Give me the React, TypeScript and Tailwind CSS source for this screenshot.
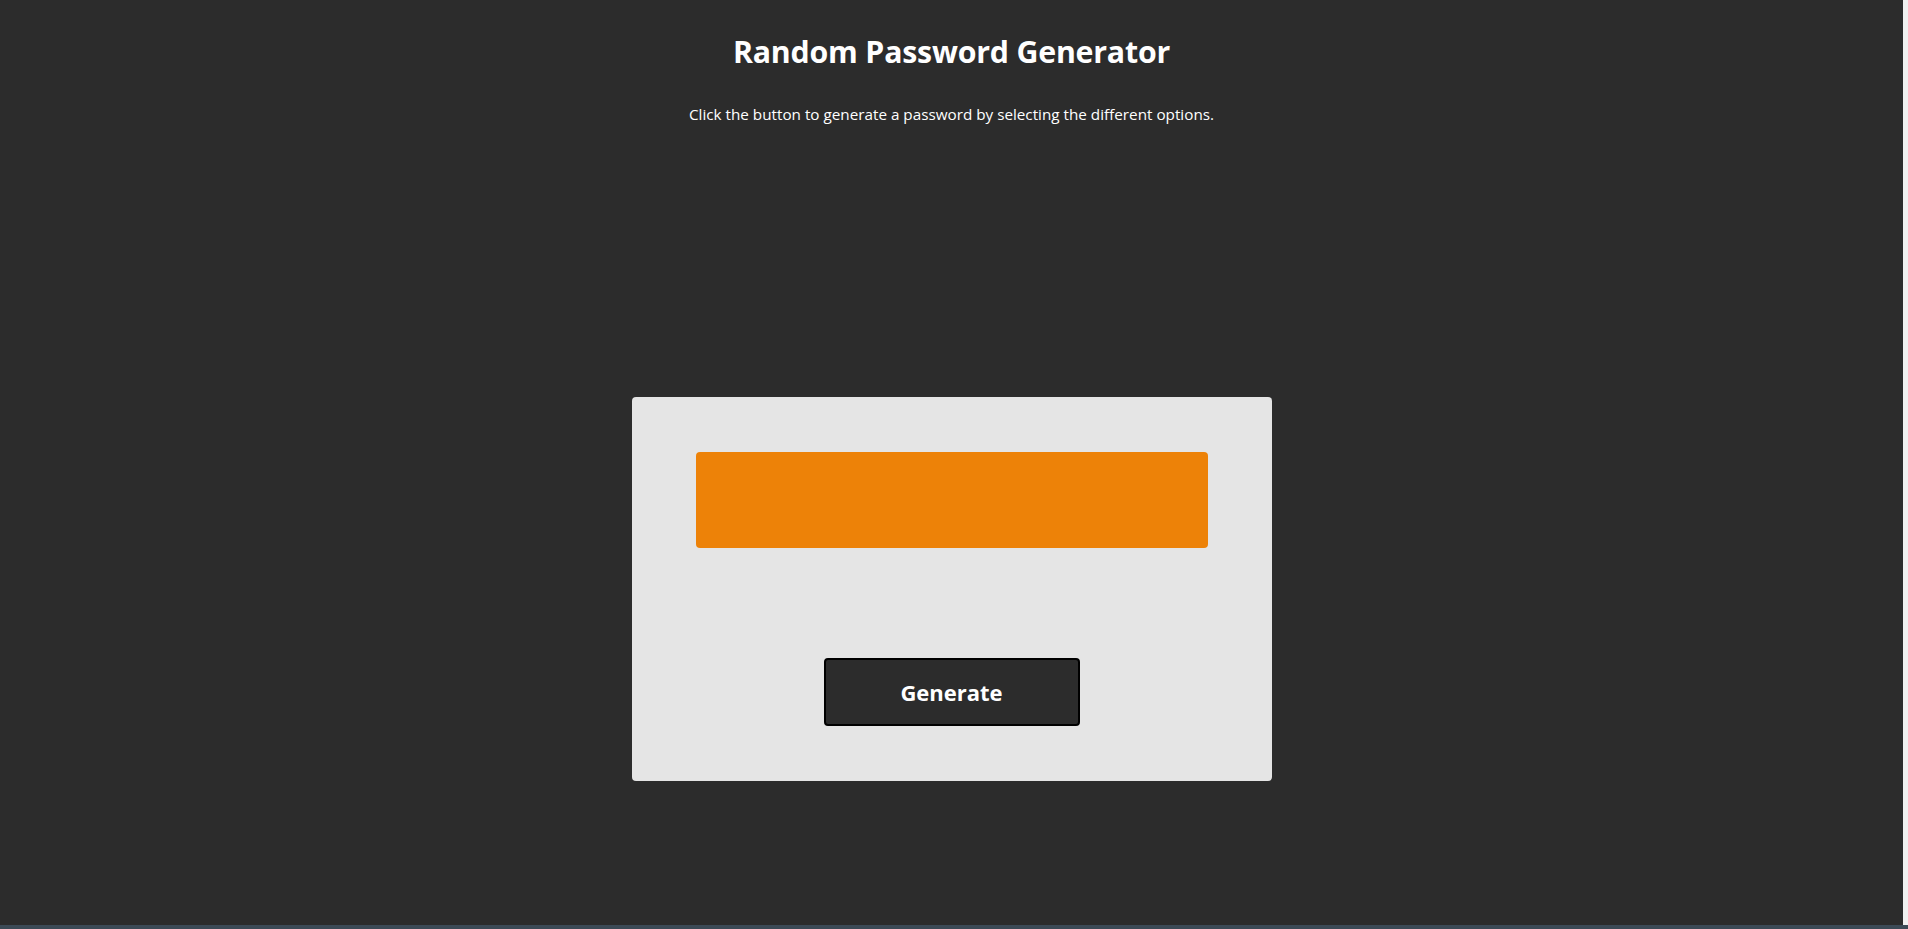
import React, { useState } from "react";

const font = { fontFamily: '"Open Sans", "Noto Sans", sans-serif' };

export default function App() {
  const [password, setPassword] = useState("");

  const generate = () => {
    const chars = "ABCDEFGHIJKLMNOPQRSTUVWXYZabcdefghijklmnopqrstuvwxyz0123456789!@#$%^&*";
    let out = "";
    for (let i = 0; i < 16; i++) out += chars[Math.floor(Math.random() * chars.length)];
    setPassword(out);
  };

  return (
    <div className="flex h-[929px] w-[1908px] flex-col overflow-hidden" style={font}>
      <div className="flex flex-1">
        <main className="flex flex-1 flex-col items-center bg-[#2c2c2c] text-white">
          <h1 className="mt-[32px] text-[30.3px] font-bold leading-[40px] tracking-[-0.2px]">
            Random Password Generator
          </h1>
          <p className="mt-[32px] text-[15.25px] leading-[20px]">
            Click the button to generate a password by selecting the different options.
          </p>

          <section className="mt-[273px] flex h-[384px] w-[640px] flex-col items-center rounded-[4px] bg-[#e5e5e5] px-[64px] pt-[55px]">
            <div className="flex h-[96px] w-[512px] items-center justify-center rounded-[4px] bg-[#ed8208] text-[22px] font-semibold text-white">
              {password}
            </div>
            <button
              onClick={generate}
              className="mt-[110px] h-[68px] w-[256px] rounded-[4px] border-2 border-black bg-[#2c2c2c] text-[22px] font-bold text-white"
            >
              Generate
            </button>
          </section>
        </main>
        <div className="w-[5px] bg-[#f0f0f0]" />
      </div>
      <div className="h-[4px] bg-[#3c4a56]" />
    </div>
  );
}
